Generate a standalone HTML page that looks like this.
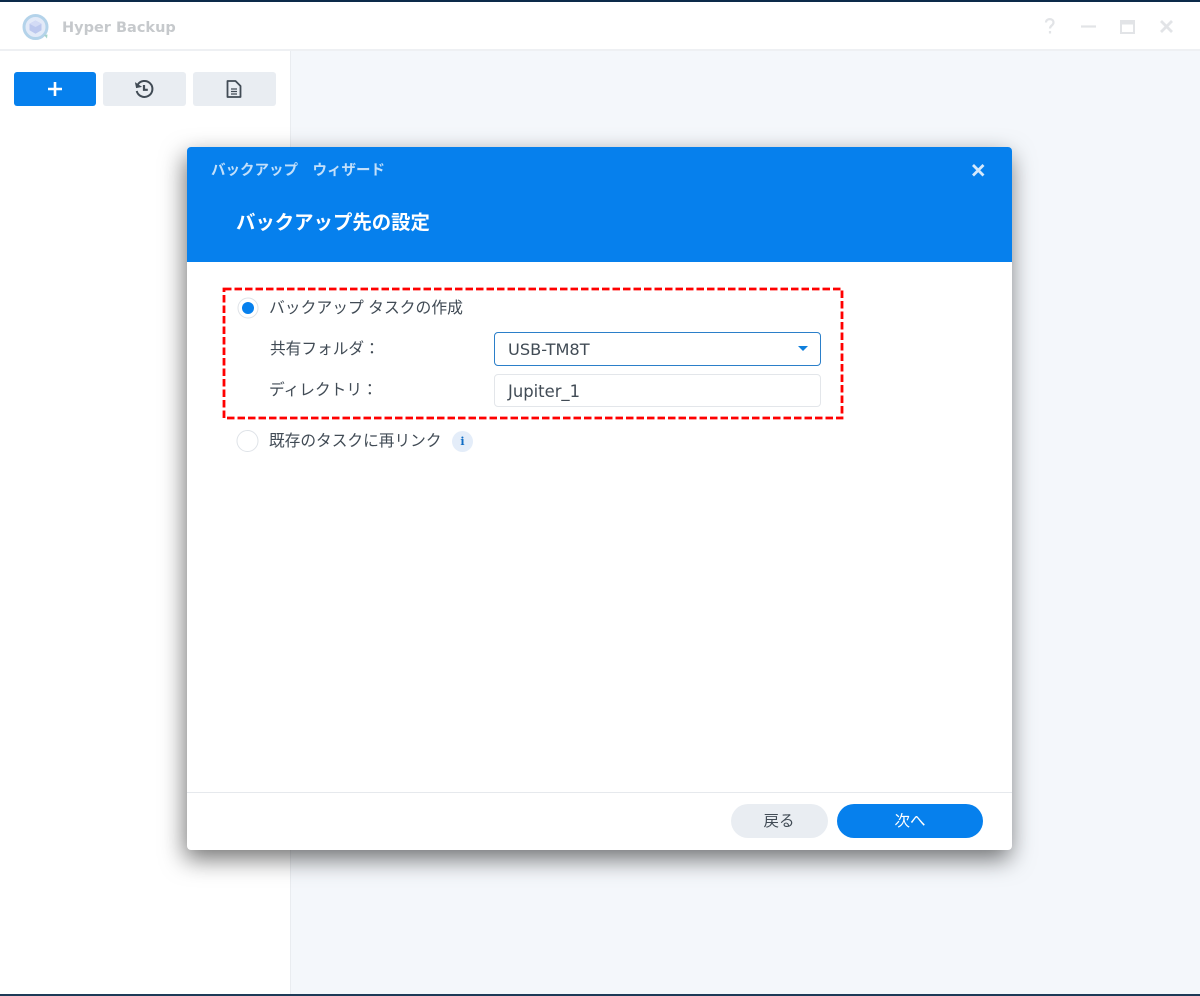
<!DOCTYPE html>
<html lang="ja"><head><meta charset="utf-8"><title>Hyper Backup</title>
<style>
html,body{margin:0;padding:0;width:1200px;height:996px;overflow:hidden;background:#fff}
body{position:relative;font-family:"DejaVu Sans","Noto Sans CJK JP",sans-serif;color:#414b55}
.a{position:absolute;white-space:nowrap}
.cjk{font-family:"Liberation Sans","Noto Sans CJK JP",sans-serif}
.btn{position:absolute;top:72px;width:83px;height:34px;border-radius:3px;background:#e9edf2}
</style></head><body>
<div class="a" style="left:0;top:0;width:1200px;height:2px;background:#0c2a4a"></div>
<div class="a" style="left:0;top:49px;width:1200px;height:2px;background:#eef0f3"></div>
<div class="a" style="left:291px;top:51px;width:909px;height:943px;background:#f4f7fb"></div>
<div class="a" style="left:290px;top:51px;width:1px;height:943px;background:#e9ecf0"></div>
<div class="a" style="left:0;top:994px;width:1200px;height:2px;background:#1d3a57"></div>

<svg class="a" style="left:20px;top:12px" width="32" height="30" viewBox="0 0 32 30">
<circle cx="15.500" cy="15" r="11.500" fill="#e3eaf8" stroke="#b4d3ea" stroke-width="3"/>
<path d="M15.500 8.500l6 3.200v6.600l-6 3.400-6-3.400v-6.600z" fill="#bcc8ee"/>
<path d="M9.500 11.700l6 3.300 6-3.300-6-3.200z" fill="#d3dbf5"/>
<path d="M24 23l3.500-.5-.5 4z" fill="#a6d3c8"/>
</svg>
<div class="a" style="left:62px;top:18px;font-size:14.500px;line-height:20px;font-weight:700;color:#c6c9cc">Hyper Backup</div>

<svg class="a" style="left:1040px;top:16px" width="140" height="20" viewBox="0 0 140 20" fill="none" stroke="#e2e4e7" stroke-width="2.200">
<path d="M6 6.500c0-4.500 7.500-4.500 7.500 0 0 3-3.500 3-3.500 6"/><path d="M10 15v2.500"/>
<path d="M41 10.500h15"/>
<path d="M81 5h13v12h-13z" stroke-width="2"/><path d="M81 6.500h13" stroke-width="4"/>
<path d="M121 5l11 11M132 5l-11 11" stroke-width="2.800"/>
</svg>

<div class="btn" style="left:13.500px;width:82.500px;background:#0680ed"></div>
<svg class="a" style="left:45px;top:79px" width="20" height="20" viewBox="0 0 20 20"><path d="M10 3v14M3 10h14" stroke="#fff" stroke-width="2.600" fill="none"/></svg>
<div class="btn" style="left:103px"></div>
<svg class="a" style="left:133px;top:78px" width="22" height="22" viewBox="0 0 22 22" fill="none" stroke="#414b55" stroke-width="2">
<path d="M4.500 7a8 8 0 1 1-.8 6"/><path d="M2.500 4.500l1 5 5-1" fill="#414b55" stroke-width="1"/><path d="M11 7v4.800h3.800" stroke-width="2.200"/>
</svg>
<div class="btn" style="left:193px"></div>
<svg class="a" style="left:224px;top:79px" width="20" height="20" viewBox="0 0 20 20" fill="none" stroke="#414b55" stroke-width="1.800">
<path d="M3.500 2h8L16.500 7v11h-13z" stroke-linejoin="round"/><path d="M7 10h6M7 12.500h6M7 15h6" stroke-width="1.200"/>
</svg>

<div class="a" style="left:187px;top:147px;width:825px;height:703px;background:#fff;border-radius:4px;box-shadow:-2px 9px 24px rgba(0,0,0,.55)"></div>
<div class="a" style="left:187px;top:147px;width:825px;height:115px;background:#0680ed;border-radius:4px 4px 0 0"></div>
<div class="a cjk" style="left:211px;top:161px;font-size:14.500px;line-height:20px;font-weight:700;color:#c2dffa">バックアップ　ウィザード</div>
<div class="a cjk" style="left:236px;top:209px;font-size:19.400px;line-height:28px;font-weight:700;color:#fff">バックアップ先の設定</div>
<svg class="a" style="left:970px;top:162px" width="17" height="17" viewBox="0 0 17 17"><path d="M3 3l10.500 10.500M13.500 3L3 13.500" stroke="#d5e9fc" stroke-width="2.800" fill="none"/></svg>

<svg class="a" style="left:221px;top:286px" width="625" height="135" viewBox="0 0 625 135"><rect x="3" y="3" width="618" height="129" fill="none" stroke="#f00" stroke-width="2.800" stroke-dasharray="7.500 3"/></svg>

<svg class="a" style="left:236px;top:296px" width="24" height="24" viewBox="0 0 24 24"><circle cx="12" cy="12" r="10" fill="#fff" stroke="#dfe3e8"/><circle cx="12" cy="12" r="6" fill="#0680ed"/></svg>
<div class="a cjk" style="left:269px;top:298px;font-size:15.800px;line-height:22px;color:#414b55">バックアップ タスクの作成</div>
<div class="a cjk" style="left:270px;top:339px;font-size:15.700px;line-height:22px;color:#414b55">共有フォルダ：</div>
<div class="a cjk" style="left:269px;top:380px;font-size:15.700px;line-height:22px;color:#414b55">ディレクトリ：</div>

<div class="a" style="left:494px;top:332px;width:325px;height:32px;border:1px solid #2b7fc9;border-radius:4px;background:#fff"></div>
<div class="a" style="left:508px;top:340px;font-size:16.200px;line-height:20px;color:#414b55">USB-TM8T</div>
<svg class="a" style="left:797px;top:345px" width="12" height="8" viewBox="0 0 12 8"><path d="M1 1h10L6 6z" fill="#0f7fdc"/></svg>
<div class="a" style="left:494px;top:374px;width:325px;height:31px;border:1px solid #e3e6ea;border-radius:4px;background:#fff"></div>
<div class="a" style="left:508px;top:382px;font-size:16.400px;line-height:20px;color:#414b55">Jupiter_1</div>

<svg class="a" style="left:236px;top:430px" width="24" height="24" viewBox="0 0 24 24"><circle cx="11.500" cy="11" r="10.500" fill="#fff" stroke="#dfe3e8"/></svg>
<div class="a cjk" style="left:269px;top:431px;font-size:15.700px;line-height:22px;color:#414b55">既存のタスクに再リンク</div>
<div class="a" style="left:452px;top:431px;width:21px;height:21px;border-radius:50%;background:#e4edf9"></div>
<div class="a" style="left:452px;top:431px;width:21px;height:21px;text-align:center;font-family:'DejaVu Serif','Liberation Serif',serif;font-size:11px;font-weight:700;line-height:21px;color:#0f6cc4">i</div>

<div class="a" style="left:187px;top:792px;width:825px;height:1px;background:#e6e9ed"></div>
<div class="a" style="left:731px;top:804px;width:97px;height:34px;border-radius:17px;background:#e9edf2"></div>
<div class="a cjk" style="left:731px;top:805px;width:96px;height:34px;text-align:center;font-size:15.500px;line-height:34px;color:#414b55">戻る</div>
<div class="a" style="left:837px;top:804px;width:146px;height:34px;border-radius:17px;background:#0680ed"></div>
<div class="a cjk" style="left:837px;top:805px;width:146px;height:34px;text-align:center;font-size:15.500px;line-height:34px;color:#fff">次へ</div>
</body></html>
